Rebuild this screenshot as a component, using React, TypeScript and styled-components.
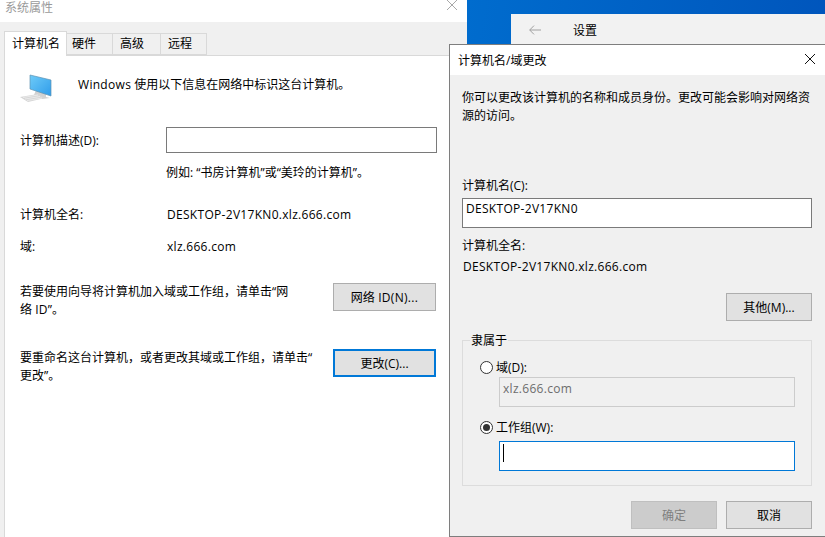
import React from "react";
import styled, { createGlobalStyle } from "styled-components";

const Global = createGlobalStyle`
  html, body { margin: 0; padding: 0; background: #0a7fdc; overflow: hidden; }
  * { box-sizing: border-box; }
  body { font-family: "Open Sans", "Noto Sans CJK SC", sans-serif; font-size: 12px; color: #000; }
`;

const Desktop = styled.div`
  position: relative;
  width: 825px;
  height: 537px;
  overflow: hidden;
  background: linear-gradient(100deg, #0a86de 0%, #0078d7 30%, #0050b8 100%);
`;

const Win = styled.div<{ $x: number; $y: number; $w: number; $h: number }>`
  position: absolute;
  left: ${(p) => p.$x}px;
  top: ${(p) => p.$y}px;
  width: ${(p) => p.$w}px;
  height: ${(p) => p.$h}px;
  display: flex;
  flex-direction: column;
`;

const SysWin = styled(Win)`
  background: #f0f0f0;
`;

const SysTitle = styled.div`
  height: 22px;
  flex: none;
  background: #fff;
  display: flex;
  align-items: flex-start;
  justify-content: space-between;
  padding: 0 10px 0 5px;
  color: #9a9a9a;
  line-height: 14px;
`;

const TitleLabel = styled.span`
  padding-top: 1px;
`;

const Tabs = styled.div`
  display: flex;
  align-items: flex-end;
  height: 33px;
  flex: none;
  padding-left: 4px;
`;

const Tab = styled.div<{ $w: number; $pad?: number; $active?: boolean }>`
  width: ${(p) => p.$w}px;
  height: ${(p) => (p.$active ? 25 : 22)}px;
  background: ${(p) => (p.$active ? "#fff" : "#f0f0f0")};
  border: 1px solid #d9d9d9;
  border-left: ${(p) => (p.$active ? "1px solid #d9d9d9" : "none")};
  border-bottom: ${(p) => (p.$active ? "none" : "1px solid #d9d9d9")};
  display: flex;
  align-items: center;
  padding-left: ${(p) => p.$pad ?? 7}px;
  padding-bottom: ${(p) => (p.$active ? 1 : 0)}px;
  line-height: 20px;
  margin-bottom: ${(p) => (p.$active ? -1 : 0)}px;
  position: relative;
  z-index: ${(p) => (p.$active ? 1 : 0)};
`;

const Panel = styled.div`
  flex: 1;
  margin-left: 4px;
  background: #fff;
  border-top: 1px solid #d9d9d9;
  border-left: 1px solid #d9d9d9;
  padding: 0 31px 0 15px;
`;

const Intro = styled.div`
  display: flex;
  align-items: center;
  height: 50px;
  margin-top: 3px;
  margin-bottom: 18px;
`;

const PcIcon = styled.svg`
  width: 34px;
  height: 30px;
  flex: none;
  margin: 8px 24px 0 0;
`;

const Latin = styled.span<{ $gap?: number }>`
  letter-spacing: 0.3px;
  margin-left: ${(p) => p.$gap ?? 0}px;
`;

const Line = styled.div<{ $mb?: number; $mt?: number; $ml?: number }>`
  line-height: 18px;
  white-space: nowrap;
  margin: ${(p) => p.$mt ?? 0}px 0 ${(p) => p.$mb ?? 0}px ${(p) => p.$ml ?? 0}px;
`;

const Row = styled.div<{ $mb?: number; $h?: number }>`
  display: flex;
  align-items: center;
  height: ${(p) => p.$h ?? 18}px;
  margin-bottom: ${(p) => p.$mb ?? 0}px;
`;

const Label = styled.div`
  width: 146px;
  flex: none;
  white-space: nowrap;
`;

const Field = styled.div<{ $w: number; $h?: number; $mb?: number; $variant?: "normal" | "disabled" | "focus" }>`
  width: ${(p) => p.$w}px;
  height: ${(p) => p.$h ?? 30}px;
  flex: none;
  margin-bottom: ${(p) => p.$mb ?? 0}px;
  padding: ${(p) => (p.$variant === "disabled" ? 2 : 1)}px 0 0 3px;
  line-height: 18px;
  background: ${(p) => (p.$variant === "disabled" ? "#f0f0f0" : "#fff")};
  border: ${(p) =>
    p.$variant === "focus"
      ? "1px solid #0078d7"
      : p.$variant === "disabled"
        ? "1px solid #cccccc"
        : "1px solid #7a7a7a"};
  color: ${(p) => (p.$variant === "disabled" ? "#6d6d6d" : "#000")};
`;

const Caret = styled.span`
  display: block;
  width: 1px;
  height: 18px;
  background: #000;
  margin-top: 1px;
`;

const ActionRow = styled.div<{ $mb?: number }>`
  display: flex;
  align-items: flex-start;
  justify-content: space-between;
  margin-bottom: ${(p) => p.$mb ?? 0}px;
`;

const Para = styled.div`
  line-height: 18px;
  white-space: nowrap;
`;

const Btn = styled.div<{ $w: number; $focus?: boolean; $disabled?: boolean }>`
  width: ${(p) => p.$w}px;
  height: 28px;
  flex: none;
  display: flex;
  align-items: center;
  justify-content: center;
  background: ${(p) => (p.$disabled ? "#cccccc" : "#e1e1e1")};
  border: ${(p) =>
    p.$focus ? "2px solid #0078d7" : p.$disabled ? "1px solid #bfbfbf" : "1px solid #adadad"};
  color: ${(p) => (p.$disabled ? "#7f7f7f" : "#000")};
`;

const SettingsWin = styled(Win)`
  background: #f2f2f2;
  padding: 0 0 0 18px;
`;

const SettingsHead = styled.div`
  display: flex;
  align-items: center;
  height: 32px;
`;

const BackIcon = styled.svg`
  width: 12px;
  height: 10px;
  margin-right: 32px;
  flex: none;
`;

const Dialog = styled(Win)`
  background: #f0f0f0;
  border: 1px solid #7e7e7e;
  border-right: none;
`;

const DialogTitle = styled.div`
  height: 30px;
  flex: none;
  background: #fff;
  display: flex;
  align-items: center;
  justify-content: space-between;
  padding: 0 10px 0 8px;
`;

const DialogBody = styled.div`
  flex: 1;
  padding: 14px 13px 0 12px;
`;

const RightEnd = styled.div<{ $mb?: number; $gap?: number }>`
  display: flex;
  justify-content: flex-end;
  gap: ${(p) => p.$gap ?? 0}px;
  margin-bottom: ${(p) => p.$mb ?? 0}px;
`;

const Group = styled.div`
  position: relative;
  width: 350px;
  height: 146px;
  border: 1px solid #dcdcdc;
  padding: 17px 17px 0 17px;
  margin-bottom: 15px;
`;

const Legend = styled.div`
  position: absolute;
  left: 7px;
  top: -9px;
  padding: 0 1px;
  background: #f0f0f0;
  line-height: 18px;
`;

const RadioRow = styled.div<{ $mb?: number }>`
  display: flex;
  align-items: center;
  gap: 3px;
  height: 18px;
  margin-bottom: ${(p) => p.$mb ?? 0}px;
`;

const Radio = styled.span<{ $on?: boolean }>`
  width: 13px;
  height: 13px;
  flex: none;
  border-radius: 50%;
  background: #fff;
  border: 1px solid #333;
  display: flex;
  align-items: center;
  justify-content: center;
  &::after {
    content: "";
    display: ${(p) => (p.$on ? "block" : "none")};
    width: 7px;
    height: 7px;
    border-radius: 50%;
    background: #333;
  }
`;

const Indented = styled.div<{ $mb?: number }>`
  margin-left: 19px;
  margin-bottom: ${(p) => p.$mb ?? 0}px;
`;

const CloseIcon = styled.svg<{ $mt?: number }>`
  width: 10px;
  height: 10px;
  flex: none;
  margin-top: ${(p) => p.$mt ?? 0}px;
`;

const X = ({ color, mt }: { color: string; mt?: number }) => (
  <CloseIcon viewBox="0 0 10 10" $mt={mt}>
    <path d="M0 0L10 10M10 0L0 10" stroke={color} strokeWidth={1} fill="none" />
  </CloseIcon>
);

export default function App() {
  return (
    <Desktop>
      <Global />
      <SettingsWin $x={511} $y={14} $w={314} $h={100}>
        <SettingsHead>
          <BackIcon viewBox="0 0 12 10">
            <path d="M12 5H0.8M5 0.6L0.7 5L5 9.4" stroke="#a0a0a0" strokeWidth="1" fill="none" />
          </BackIcon>
          <span>设置</span>
        </SettingsHead>
      </SettingsWin>

      <SysWin $x={0} $y={0} $w={467} $h={537}>
        <SysTitle>
          <TitleLabel>系统属性</TitleLabel>
          <X color="#a8a8a8" />
        </SysTitle>
        <Tabs>
          <Tab $w={63} $active>计算机名</Tab>
          <Tab $w={46} $pad={5}>硬件</Tab>
          <Tab $w={48}>高级</Tab>
          <Tab $w={46}>远程</Tab>
        </Tabs>
        <Panel>
          <Intro>
            <PcIcon viewBox="0 0 34 30">
              <defs>
                <linearGradient id="pcScreen" x1="0" y1="0" x2="1" y2="1">
                  <stop offset="0" stopColor="#6ecbf8" />
                  <stop offset="1" stopColor="#2f9cea" />
                </linearGradient>
              </defs>
              <path d="M16 17L26 20V24L30 25L22 26L14 22Z" fill="#d2d2d2" />
              <path d="M10 2L31 7V23L10 16Z" fill="url(#pcScreen)" stroke="#5f93b3" strokeWidth="0.7" />
              <path d="M0 24L18 21L25 25L8 29Z" fill="#d6d6d6" />
              <path d="M3 24.5L18 22M5 26L20 23.5M7 27.5L22 25" stroke="#f2f2f2" strokeWidth="0.7" />
            </PcIcon>
            <span><Latin>Windows</Latin> 使用以下信息在网络中标识这台计算机。</span>
          </Intro>
          <Row $h={26} $mb={10}>
            <Label>计算机描述(D):</Label>
            <Field $w={271} $h={26} />
          </Row>
          <Row $mb={24}>
            <Label />
            <span>例如: “书房计算机”或“美玲的计算机”。</span>
          </Row>
          <Row $mb={14}>
            <Label>计算机全名:</Label>
            <Latin $gap={1}>DESKTOP-2V17KN0.xlz.666.com</Latin>
          </Row>
          <Row $mb={28}>
            <Label>域:</Label>
            <Latin $gap={1}>xlz.666.com</Latin>
          </Row>
          <ActionRow $mb={30}>
            <Para>若要使用向导将计算机加入域或工作组，请单击“网<br />络 <Latin>ID</Latin>”。</Para>
            <Btn $w={103}>网络 <Latin>&nbsp;ID(N)...</Latin></Btn>
          </ActionRow>
          <ActionRow>
            <Para>要重命名这台计算机，或者更改其域或工作组，请单击“<br />更改”。</Para>
            <Btn $w={103} $focus>更改(C)...</Btn>
          </ActionRow>
        </Panel>
      </SysWin>

      <Dialog $x={449} $y={44} $w={376} $h={493}>
        <DialogTitle>
          <span>计算机名/域更改</span>
          <X color="#111" mt={-2} />
        </DialogTitle>
        <DialogBody>
          <Para>你可以更改该计算机的名称和成员身份。更改可能会影响对网络资<br />源的访问。</Para>
          <Line $mt={52} $mb={3}>计算机名(C):</Line>
          <Field $w={350} $mb={9}><Latin>DESKTOP-2V17KN0</Latin></Field>
          <Line $mb={3}>计算机全名:</Line>
          <Line $mb={17} $ml={1}><Latin>DESKTOP-2V17KN0.xlz.666.com</Latin></Line>
          <RightEnd $mb={19}>
            <Btn $w={86}>其他(M)...</Btn>
          </RightEnd>
          <Group>
            <Legend>隶属于</Legend>
            <RadioRow $mb={1}>
              <Radio />
              <span>域(D):</span>
            </RadioRow>
            <Indented $mb={11}>
              <Field $w={296} $variant="disabled"><Latin>xlz.666.com</Latin></Field>
            </Indented>
            <RadioRow $mb={5}>
              <Radio $on />
              <span>工作组(W):</span>
            </RadioRow>
            <Indented>
              <Field $w={296} $variant="focus"><Caret /></Field>
            </Indented>
          </Group>
          <RightEnd $gap={9}>
            <Btn $w={86} $disabled>确定</Btn>
            <Btn $w={86}>取消</Btn>
          </RightEnd>
        </DialogBody>
      </Dialog>
    </Desktop>
  );
}
